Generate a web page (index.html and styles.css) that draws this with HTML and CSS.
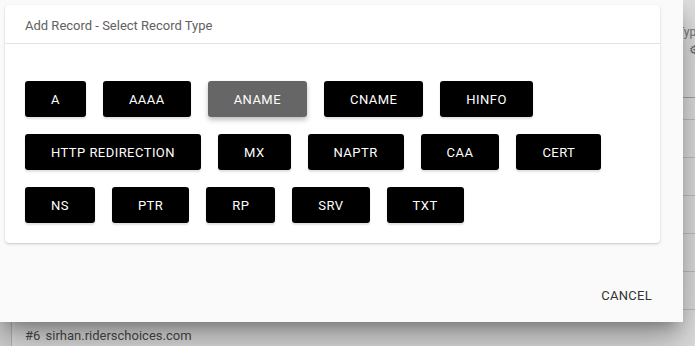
FILE: index.html
```html
<!DOCTYPE html>
<html lang="en">
<head>
    <meta charset="UTF-8">
    <meta name="viewport" content="width=device-width, initial-scale=1.0">
    <title>Add Record</title>
    <link rel="stylesheet" href="styles.css">
</head>
<body>

<div class="page">
    <div class="records">
        <div class="records-head">
            <span class="col-type">Type</span>
            <span class="sort-icon">&#9881;</span>
        </div>
        <div class="records-row short"></div>
        <div class="records-row"></div>
        <div class="records-row"></div>
        <div class="records-row"></div>
        <div class="records-row"></div>
        <div class="records-row"></div>
        <div class="records-row"><span class="row-num">#6</span> sirhan.riderschoices.com</div>
    </div>
</div>

<div class="overlay"></div>

<div class="dialog">
    <div class="card">
        <div class="card-title">Add Record - Select Record Type</div>
        <div class="types">
            <button class="type-btn">A</button>
            <button class="type-btn">AAAA</button>
            <button class="type-btn active">ANAME</button>
            <button class="type-btn">CNAME</button>
            <button class="type-btn">HINFO</button>
            <button class="type-btn">HTTP REDIRECTION</button>
            <button class="type-btn">MX</button>
            <button class="type-btn">NAPTR</button>
            <button class="type-btn">CAA</button>
            <button class="type-btn">CERT</button>
            <button class="type-btn">NS</button>
            <button class="type-btn">PTR</button>
            <button class="type-btn">RP</button>
            <button class="type-btn">SRV</button>
            <button class="type-btn">TXT</button>
        </div>
    </div>
    <div class="dialog-actions">
        <button class="text-btn">Cancel</button>
    </div>
</div>

</body>
</html>
```

FILE: styles.css
```css
body {
    margin: 0;
    font-family: Roboto, "Liberation Sans", Arial, sans-serif;
    background: #f2f2f2;
    overflow: hidden;
}
.page {
    padding: 0 0 0 11px;
}
.records {
    background: #fff;
    border-left: 1px solid #cfcfcf;
    font-size: 13px;
    color: #555;
}
.records-head {
    position: relative;
    height: 98px;
    border-bottom: 1px solid #bdbdbd;
    box-sizing: border-box;
}
.col-type {
    position: absolute;
    left: 665px;
    top: 25px;
    font-size: 12px;
    color: #888;
}
.sort-icon {
    position: absolute;
    left: 677px;
    top: 43px;
    font-size: 12px;
    color: #777;
}
.records-row {
    height: 38px;
    border-bottom: 1px solid #dcdcdc;
    box-sizing: border-box;
    padding-left: 13px;
    line-height: 52px;
}
.records-row.short {
    height: 22px;
}
.row-num {
    margin-right: 2px;
}
.overlay {
    position: absolute;
    inset: 0;
    background: rgba(0, 0, 0, 0.1);
}
.dialog {
    position: absolute;
    left: 0;
    top: 0;
    width: 683px;
    height: 322px;
    background: #fafafa;
    display: flex;
    flex-direction: column;
    box-shadow: 0 11px 15px -7px rgba(0, 0, 0, 0.3),
                0 24px 38px 3px rgba(0, 0, 0, 0.18),
                0 9px 46px 8px rgba(0, 0, 0, 0.14);
}
.card {
    margin: 5px 0 0 5px;
    width: 655px;
    background: #fff;
    border-radius: 4px;
    box-shadow: 0 1px 3px rgba(0, 0, 0, 0.16), 0 1px 1px rgba(0, 0, 0, 0.06);
}
.card-title {
    height: 37px;
    line-height: 39px;
    padding: 1px 20px 0;
    font-size: 13px;
    color: #616161;
    border-bottom: 1px solid #e3e3e3;
}
.types {
    display: flex;
    flex-wrap: wrap;
    gap: 17px 17px;
    padding: 37px 20px 20px;
    width: 600px;
}
.type-btn {
    height: 36px;
    padding: 0 26px;
    background: #000;
    color: #fff;
    border: none;
    border-radius: 3px;
    font-family: inherit;
    font-size: 13px;
    letter-spacing: 0.45px;
    box-shadow: 0 2px 2px rgba(0, 0, 0, 0.12);
    cursor: pointer;
}
.type-btn.active {
    background: #666;
    box-shadow: 0 3px 5px rgba(0, 0, 0, 0.25);
}
.dialog-actions {
    margin-top: auto;
    height: 54px;
    display: flex;
    align-items: center;
    justify-content: flex-end;
    padding-right: 15px;
}
.text-btn {
    background: none;
    border: none;
    padding: 0 16px;
    height: 36px;
    font-family: inherit;
    font-size: 13px;
    text-transform: uppercase;
    letter-spacing: 0.3px;
    color: #333;
    cursor: pointer;
}
```
